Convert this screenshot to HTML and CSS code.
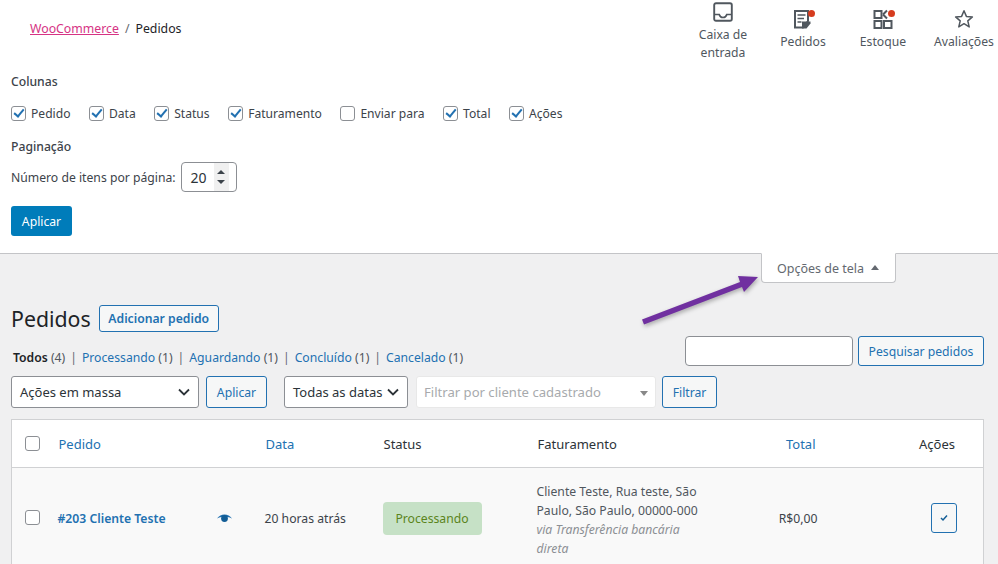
FILE: index.html
```html
<!DOCTYPE html>
<html>
  <head>
    <title>Pedidos</title>
    <meta charset="UTF-8">
    <link rel="stylesheet" href="styles.css">
  </head>
  <body>
    <div class="top-panel">
      <div class="header">
        <div class="breadcrumb"><a href="#">WooCommerce</a><span class="sep">/</span><span>Pedidos</span></div>
        <div class="activity">
          <div class="activity-item item-inbox">
            <svg width="20" height="20" viewBox="0 0 20 20"><path d="M3 1.200h14a1.800 1.800 0 0 1 1.800 1.800v14a1.800 1.800 0 0 1-1.800 1.800H3A1.800 1.800 0 0 1 1.200 17V3A1.800 1.800 0 0 1 3 1.200z" fill="none" stroke="#50575e" stroke-width="1.900"/><path d="M1.500 12.500h4.700c.6 2 2 3 3.800 3s3.200-1 3.800-3h4.700" fill="none" stroke="#50575e" stroke-width="1.700"/></svg>
            <span>Caixa de<br>entrada</span>
          </div>
          <div class="activity-item item-orders">
            <span class="icon-wrap">
              <svg width="20" height="20" viewBox="0 0 20 20"><path d="M2 2h13v10l-5 6.500H2z" fill="none" stroke="#50575e" stroke-width="2"/><path d="M4.500 6h8M4.500 9.500h6.500M4.500 13h4" stroke="#50575e" stroke-width="1.700"/><path d="M9 19.500v-7h8.500v2l-4 5z" fill="#50575e"/></svg>
              <i class="dot"></i>
            </span>
            <span>Pedidos</span>
          </div>
          <div class="activity-item item-stock">
            <span class="icon-wrap">
              <svg width="20" height="20" viewBox="0 0 20 20"><path d="M1.500 2h7v7h-7zM1.500 12h7v7h-7zM11 12h7.500v7H11z" fill="none" stroke="#50575e" stroke-width="2"/><path d="M10 5.500l4-4M10 5.500l4 4" fill="none" stroke="#50575e" stroke-width="2"/></svg>
              <i class="dot"></i>
            </span>
            <span>Estoque</span>
          </div>
          <div class="activity-item item-reviews">
            <svg width="20" height="20" viewBox="0 0 20 20"><path d="M10 1.800l2.400 5.600 6 .5-4.600 4 1.400 6L10 14.700l-5.200 3.200 1.400-6-4.600-4 6-.5z" fill="none" stroke="#50575e" stroke-width="1.500" stroke-linejoin="round"/></svg>
            <span>Avaliações</span>
          </div>
        </div>
      </div>

      <div class="screen-options">
        <h5>Colunas</h5>
        <div class="columns">
          <label><i class="check on"></i>Pedido</label>
          <label><i class="check on"></i>Data</label>
          <label><i class="check on"></i>Status</label>
          <label><i class="check on"></i>Faturamento</label>
          <label><i class="check"></i>Enviar para</label>
          <label><i class="check on"></i>Total</label>
          <label><i class="check on"></i>Ações</label>
        </div>
        <h5 class="pagination-title">Paginação</h5>
        <div class="per-page">
          <span>Número de itens por página:</span>
          <div class="number-box">
            <span>20</span>
            <span class="spin"><i class="spin-up"></i><i class="spin-down"></i></span>
          </div>
        </div>
        <a href="#" class="button-primary">Aplicar</a>
      </div>
    </div>

    <div class="tab-row">
      <div class="options-tab">Opções de tela<i class="tab-arrow"></i></div>
    </div>

    <svg class="annotation" width="130" height="60" viewBox="0 0 130 60">
      <path d="M2 46.500L100 9l-2-6 20 1-14 15-2-5L4 51.500z" fill="#7030a0"/>
    </svg>

    <div class="wrap">
      <div class="title-row">
        <h1>Pedidos</h1>
        <a href="#" class="button-outline add-order">Adicionar pedido</a>
      </div>

      <div class="status-row">
        <ul class="subsub">
          <li><b>Todos</b> <span class="count">(4)</span></li>
          <li><a href="#">Processando <span class="count">(1)</span></a></li>
          <li><a href="#">Aguardando <span class="count">(1)</span></a></li>
          <li><a href="#">Concluído <span class="count">(1)</span></a></li>
          <li><a href="#">Cancelado <span class="count">(1)</span></a></li>
        </ul>
        <div class="search-box">
          <div class="search-input"></div>
          <a href="#" class="button-outline search-button">Pesquisar pedidos</a>
        </div>
      </div>

      <div class="tablenav">
        <div class="select bulk-select">Ações em massa<svg class="chevron" width="12" height="8" viewBox="0 0 12 8"><path d="M1 1.500l5 5 5-5" fill="none" stroke="#2c3338" stroke-width="1.800"/></svg></div>
        <a href="#" class="button-outline apply">Aplicar</a>
        <div class="select date-select">Todas as datas<svg class="chevron" width="12" height="8" viewBox="0 0 12 8"><path d="M1 1.500l5 5 5-5" fill="none" stroke="#2c3338" stroke-width="1.800"/></svg></div>
        <div class="customer-select">Filtrar por cliente cadastrado<i class="caret"></i></div>
        <a href="#" class="button-outline filter">Filtrar</a>
      </div>

      <table class="orders">
        <colgroup>
          <col class="col-cb"><col class="col-order"><col class="col-date"><col class="col-status"><col class="col-billing"><col class="col-total"><col class="col-actions">
        </colgroup>
        <tr>
          <th class="cb"><i class="check"></i></th>
          <th><a href="#">Pedido</a></th>
          <th><a href="#">Data</a></th>
          <th>Status</th>
          <th>Faturamento</th>
          <th class="right"><a href="#">Total</a></th>
          <th class="right actions">Ações</th>
        </tr>
        <tr class="order-row">
          <td class="cb"><i class="check"></i></td>
          <td>
            <div class="order-cell">
              <a href="#"><b>#203 Cliente Teste</b></a>
              <svg width="15" height="9" viewBox="0 0 15 9"><path d="M0 4.500C2 2 4.500 .5 7.500 .5S13 2 15 4.500C13.500 3.500 12 3 10.500 3h-6C3 3 1.500 3.500 0 4.500z" fill="#2271b1"/><circle cx="7.500" cy="4.500" r="3.400" fill="#135e96"/></svg>
            </div>
          </td>
          <td class="date">20 horas atrás</td>
          <td><span class="status-badge">Processando</span></td>
          <td class="billing">Cliente Teste, Rua teste, São Paulo, São Paulo, 00000-000<em>via Transferência bancária direta</em></td>
          <td class="right total">R$0,00</td>
          <td class="right actions"><a href="#" class="action-button"><svg width="8" height="7" viewBox="0 0 8 7"><path d="M1 3l2 2 4-4.500" fill="none" stroke="#135e96" stroke-width="1.500"/></svg></a></td>
        </tr>
      </table>
    </div>
  </body>
</html>
```

FILE: styles.css
```css
html, body {
  width: 100%;
  height: 100%;
  margin: 0px;
  padding: 0px;
  overflow: hidden;
}

body {
  position: relative;
  background-color: #f0f0f1;
  color: #3c434a;
  font-family: "Noto Sans", sans-serif;
  font-size: 12.2px;
}

a {
  color: #2271b1;
  text-decoration: none;
}

.top-panel {
  background-color: #fff;
  border-bottom: 1px solid #c3c4c7;
  height: 253px;
}

.header {
  display: flex;
  justify-content: space-between;
  height: 66px;
}

.breadcrumb {
  padding: 20px 0 0 30px;
  color: #1d2327;
  font-size: 12.3px;
}

.breadcrumb a {
  color: #d63384;
  text-decoration: underline;
}

.breadcrumb .sep {
  margin: 0 6px;
  color: #646970;
}

.activity {
  display: flex;
  padding-right: 4px;
  color: #50575e;
  text-align: center;
  line-height: 18px;
}

.activity-item {
  display: flex;
  flex-direction: column;
  align-items: center;
}

.item-inbox {
  width: 50px;
  margin-right: 30px;
  padding-top: 2px;
}

.item-inbox svg {
  margin-bottom: 4px;
}

.item-orders {
  width: 50px;
  margin-right: 30px;
  padding-top: 9px;
}

.item-stock {
  width: 50px;
  margin-right: 26px;
  padding-top: 9px;
}

.item-reviews {
  width: 60px;
  padding-top: 9px;
}

.item-orders svg, .item-stock svg, .item-reviews svg {
  display: block;
  margin-bottom: 4px;
}

.icon-wrap {
  position: relative;
  display: block;
}

.dot {
  position: absolute;
  top: 1px;
  right: -2px;
  width: 7px;
  height: 7px;
  border-radius: 50%;
  background-color: #d63c1e;
}

.screen-options {
  padding: 7px 0 0 11px;
}

h5 {
  margin: 0;
  font-size: 12.2px;
  font-weight: 500;
  line-height: 18px;
}

.columns {
  display: flex;
  gap: 18.5px;
  margin-top: 13px;
  height: 18px;
  font-size: 12.1px;
}

.columns label {
  display: flex;
  align-items: center;
  gap: 5px;
}

.check {
  display: inline-block;
  position: relative;
  box-sizing: border-box;
  width: 15px;
  height: 15px;
  border: 1px solid #8c8f94;
  border-radius: 3px;
  background-color: #fff;
}

.check.on:after {
  content: '';
  position: absolute;
  left: 4px;
  top: 0px;
  width: 4px;
  height: 8px;
  border: solid #2271b1;
  border-width: 0 2px 2px 0;
  transform: rotate(40deg);
}

.pagination-title {
  margin-top: 16px;
}

.per-page {
  display: flex;
  align-items: center;
  gap: 5px;
  margin-top: 6px;
}

.number-box {
  display: flex;
  align-items: center;
  justify-content: space-between;
  box-sizing: border-box;
  width: 56px;
  height: 30px;
  padding: 0 8px 0 9px;
  border: 1px solid #8c8f94;
  border-radius: 4px;
  color: #2c3338;
  font-size: 14px;
}

.spin {
  display: flex;
  flex-direction: column;
  align-items: center;
  justify-content: center;
  gap: 6px;
  width: 15px;
  height: 28px;
  margin-right: -1px;
  background-color: #f0f0f0;
}

.spin i {
  width: 0;
  height: 0;
  border-left: 4px solid transparent;
  border-right: 4px solid transparent;
}

.spin-up {
  border-bottom: 4px solid #3c434a;
}

.spin-down {
  border-top: 4px solid #3c434a;
}

.button-primary {
  display: flex;
  align-items: center;
  justify-content: center;
  width: 61px;
  height: 30px;
  margin-top: 14px;
  border-radius: 3px;
  background-color: #007cba;
  color: #fff;
}

.tab-row {
  display: flex;
  justify-content: flex-end;
  padding-right: 102px;
}

.options-tab {
  display: flex;
  align-items: center;
  box-sizing: border-box;
  width: 135px;
  height: 30px;
  margin-top: -1px;
  padding-left: 15px;
  border: 1px solid #c3c4c7;
  border-top: 1px solid #fff;
  border-radius: 0 0 4px 4px;
  background-color: #fff;
  color: #646970;
  font-size: 12.5px;
}

.tab-arrow {
  width: 0;
  height: 0;
  margin-left: 7px;
  margin-bottom: 2px;
  border-left: 4px solid transparent;
  border-right: 4px solid transparent;
  border-bottom: 5px solid #646970;
}

.annotation {
  position: absolute;
  left: 640px;
  top: 273px;
  filter: drop-shadow(1px 2px 2px rgba(0, 0, 0, .3));
}

.wrap {
  padding: 22px 14px 0 11px;
}

.title-row {
  display: flex;
  align-items: center;
  gap: 8px;
  height: 27px;
}

h1 {
  margin: 0;
  color: #1d2327;
  font-size: 21.3px;
  font-weight: 400;
}

.button-outline {
  display: flex;
  align-items: center;
  justify-content: center;
  box-sizing: border-box;
  border: 1px solid #2271b1;
  border-radius: 3px;
  background-color: #f6f7f7;
  color: #2271b1;
}

.add-order {
  width: 120px;
  height: 27px;
  font-weight: 600;
}

.status-row {
  display: flex;
  justify-content: space-between;
  align-items: flex-end;
  height: 30px;
  margin-top: 4px;
}

.subsub {
  display: flex;
  margin: 0 0 -1px 2px;
  padding: 0;
  list-style: none;
  line-height: 18px;
}

.subsub li + li:before {
  content: '|';
  margin: 0 5px;
  color: #646970;
}

.subsub b {
  color: #1d2327;
  font-weight: 600;
}

.count {
  color: #50575e;
}

.search-box {
  display: flex;
  gap: 5px;
}

.search-input {
  box-sizing: border-box;
  width: 168px;
  height: 30px;
  border: 1px solid #8c8f94;
  border-radius: 4px;
  background-color: #fff;
}

.search-button {
  width: 126px;
  height: 30px;
}

.tablenav {
  display: flex;
  height: 32px;
  margin-top: 10px;
}

.select {
  display: flex;
  align-items: center;
  justify-content: space-between;
  box-sizing: border-box;
  height: 32px;
  padding: 0 8px;
  border: 1px solid #8c8f94;
  border-radius: 3px;
  background-color: #fff;
  color: #2c3338;
  font-size: 13px;
}

.bulk-select {
  width: 188px;
}

.apply {
  width: 61px;
  height: 32px;
  margin-left: 7px;
}

.date-select {
  width: 124px;
  margin-left: 17px;
}

.customer-select {
  position: relative;
  display: flex;
  align-items: center;
  box-sizing: border-box;
  width: 240px;
  height: 32px;
  margin-left: 8px;
  padding-left: 7px;
  border: 1px solid #e8e8e8;
  border-radius: 3px;
  background-color: #fff;
  color: #a7aaad;
  font-size: 13.1px;
}

.caret {
  position: absolute;
  right: 7px;
  top: 14px;
  width: 0;
  height: 0;
  border-left: 4px solid transparent;
  border-right: 4px solid transparent;
  border-top: 5px solid #888;
}

.filter {
  width: 55px;
  height: 32px;
  margin-left: 6px;
}

.orders {
  width: 973px;
  margin-top: 11px;
  border: 1px solid #d0d1d3;
  border-collapse: collapse;
  table-layout: fixed;
}

.col-cb { width: 35px; }
.col-order { width: 207px; }
.col-date { width: 118px; }
.col-status { width: 154px; }
.col-billing { width: 200px; }
.col-total { width: 102px; }

.orders th {
  height: 47px;
  padding: 0 12px;
  border-bottom: 1px solid #d0d1d3;
  background-color: #fff;
  color: #2c3338;
  font-size: 13px;
  font-weight: 400;
  text-align: left;
}

.orders td {
  padding: 10px 12px 8px;
  background-color: #f9f9f9;
  vertical-align: middle;
}

.orders .cb {
  padding: 0 0 0 13px;
}

.orders .cb .check {
  display: block;
}

.orders .right {
  text-align: right;
}

.orders .total {
  padding-right: 10px;
}

.orders .actions {
  padding-right: 28px;
}

.order-cell {
  display: flex;
  align-items: center;
  justify-content: space-between;
  margin-left: -1px;
  padding-right: 10px;
}

.order-cell b {
  font-weight: 600;
}

.orders .date {
  padding-left: 11px;
}

.status-badge {
  display: inline-flex;
  align-items: center;
  justify-content: center;
  width: 99px;
  height: 33px;
  margin-left: -1px;
  border-radius: 4px;
  background-color: #c6e1c6;
  color: #5b841b;
}

.orders .billing {
  padding-top: 14px;
  padding-left: 11px;
  color: #50575e;
  line-height: 19px;
}

.billing em {
  display: block;
  color: #8c8f94;
}

.action-button {
  display: inline-flex;
  align-items: center;
  justify-content: center;
  box-sizing: border-box;
  width: 26px;
  height: 30px;
  margin-right: -2px;
  border: 1px solid #2271b1;
  border-radius: 3px;
  background-color: #f6f7f7;
}
```
